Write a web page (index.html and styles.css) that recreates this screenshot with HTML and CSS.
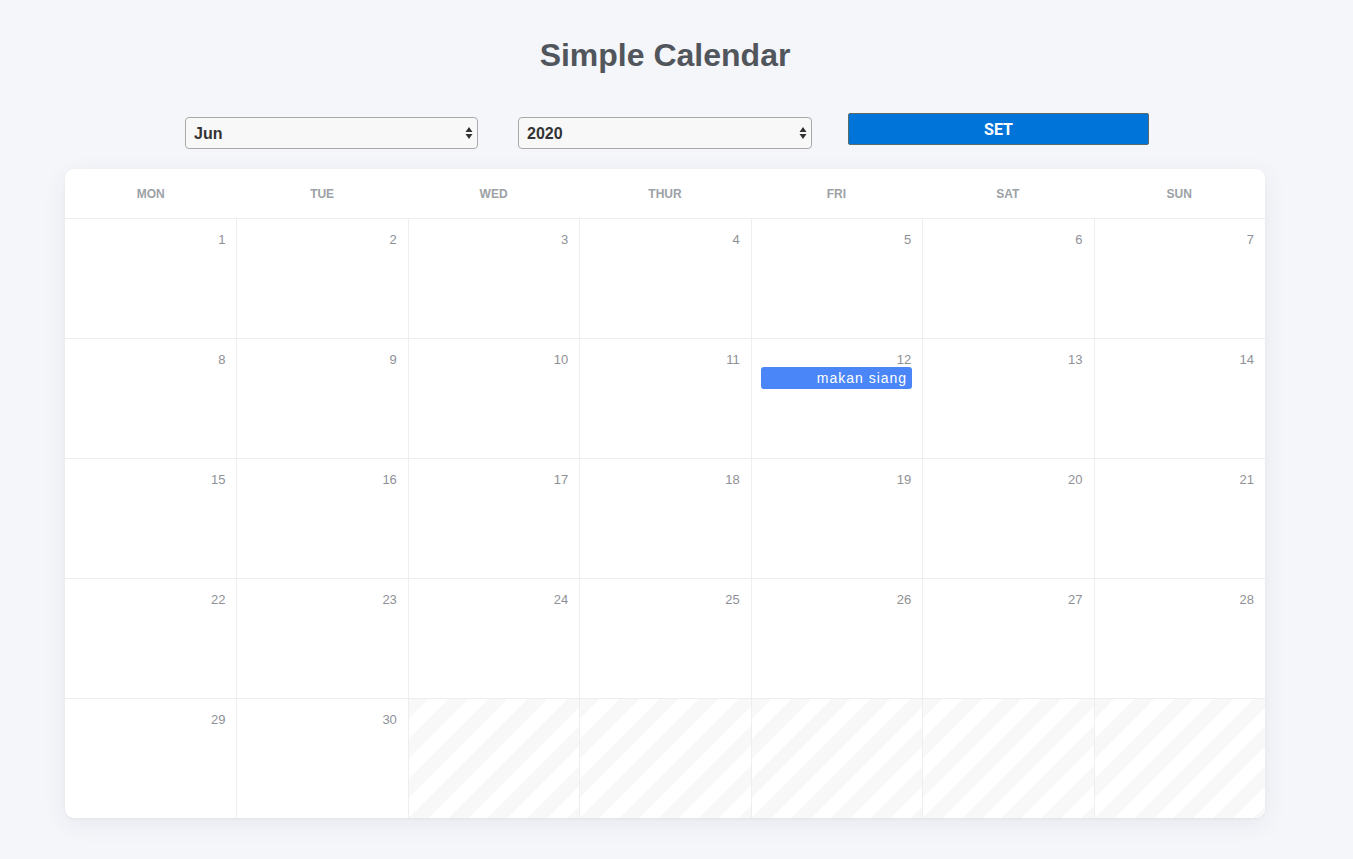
FILE: index.html
```html
<!DOCTYPE html>
<html lang="en">
<head>
<meta charset="utf-8">
<title>Simple Calendar</title>
<link rel="stylesheet" href="styles.css">
</head>
<body>
<div class="app">
  <h1 class="title">Simple Calendar</h1>
  <div class="controls">
    <div class="select-wrap month">
      <select class="select"><option>Jun</option></select>
      <svg class="arrows" width="8" height="14" viewBox="0 0 8 14"><path d="M4 1 L7.5 6 L0.5 6 Z M4 13 L7.5 8 L0.5 8 Z" fill="#333"/></svg>
    </div>
    <div class="select-wrap year">
      <select class="select"><option>2020</option></select>
      <svg class="arrows" width="8" height="14" viewBox="0 0 8 14"><path d="M4 1 L7.5 6 L0.5 6 Z M4 13 L7.5 8 L0.5 8 Z" fill="#333"/></svg>
    </div>
    <button class="set-btn">SET</button>
  </div>
  <div class="calendar">
    <div class="head">MON</div>
    <div class="head">TUE</div>
    <div class="head">WED</div>
    <div class="head">THUR</div>
    <div class="head">FRI</div>
    <div class="head">SAT</div>
    <div class="head">SUN</div>

    <div class="day first"><span class="num">1</span></div>
    <div class="day"><span class="num">2</span></div>
    <div class="day"><span class="num">3</span></div>
    <div class="day"><span class="num">4</span></div>
    <div class="day"><span class="num">5</span></div>
    <div class="day"><span class="num">6</span></div>
    <div class="day"><span class="num">7</span></div>

    <div class="day first"><span class="num">8</span></div>
    <div class="day"><span class="num">9</span></div>
    <div class="day"><span class="num">10</span></div>
    <div class="day"><span class="num">11</span></div>
    <div class="day"><span class="num">12</span><div class="event">makan siang</div></div>
    <div class="day"><span class="num">13</span></div>
    <div class="day"><span class="num">14</span></div>

    <div class="day first"><span class="num">15</span></div>
    <div class="day"><span class="num">16</span></div>
    <div class="day"><span class="num">17</span></div>
    <div class="day"><span class="num">18</span></div>
    <div class="day"><span class="num">19</span></div>
    <div class="day"><span class="num">20</span></div>
    <div class="day"><span class="num">21</span></div>

    <div class="day first"><span class="num">22</span></div>
    <div class="day"><span class="num">23</span></div>
    <div class="day"><span class="num">24</span></div>
    <div class="day"><span class="num">25</span></div>
    <div class="day"><span class="num">26</span></div>
    <div class="day"><span class="num">27</span></div>
    <div class="day"><span class="num">28</span></div>

    <div class="day first"><span class="num">29</span></div>
    <div class="day"><span class="num">30</span></div>
    <div class="day empty"></div>
    <div class="day empty"></div>
    <div class="day empty"></div>
    <div class="day empty"></div>
    <div class="day empty"></div>
  </div>
</div>
</body>
</html>
```

FILE: styles.css
```css
* { box-sizing: border-box; }

html, body {
  margin: 0;
  padding: 0;
  background: #f5f6fa;
  font-family: "Liberation Sans", Arial, sans-serif;
}

.app {
  width: 1330px;
  padding-top: 37px;
  padding-bottom: 40px;
}

.title {
  margin: 0;
  text-align: center;
  font-size: 32px;
  line-height: 37px;
  font-weight: bold;
  color: #51555c;
}

.controls {
  width: 964px;
  margin: 39px 0 0 185px;
  display: flex;
  align-items: flex-start;
}

.select-wrap {
  position: relative;
  margin-top: 4px;
  height: 32px;
}

.select-wrap.month { width: 293px; margin-right: 40px; }
.select-wrap.year { width: 294px; margin-right: 36px; }

.select {
  -webkit-appearance: none;
  appearance: none;
  width: 100%;
  height: 32px;
  margin: 0;
  padding: 0 0 0 8px;
  background: #f8f8f8;
  border: 1px solid #a9a9a9;
  border-radius: 4px;
  font-family: "Liberation Sans", Arial, sans-serif;
  font-size: 16px;
  font-weight: bold;
  color: #333;
}

.arrows {
  position: absolute;
  right: 5px;
  top: 9px;
}

.set-btn {
  width: 301px;
  height: 32px;
  margin: 0;
  padding: 0;
  background: #0074d9;
  border: 1px solid #5d6b68;
  border-radius: 2px;
  color: #fff;
  font-family: Roboto, "Liberation Sans", sans-serif;
  font-size: 16px;
  font-weight: bold;
}

.calendar {
  width: 1200px;
  margin: 20px auto 0;
  background: #fff;
  border-radius: 9px;
  box-shadow: 0 6px 24px rgba(40, 50, 90, 0.07), 0 1px 3px rgba(0, 0, 0, 0.04);
  display: grid;
  grid-template-columns: repeat(7, 1fr);
  grid-template-rows: 49px repeat(5, 120px);
  overflow: hidden;
}

.head {
  display: flex;
  align-items: center;
  justify-content: center;
  font-size: 12px;
  font-weight: bold;
  color: #9ca1a6;
  padding-top: 1px;
}

.day {
  border-top: 1px solid #eeeeee;
  border-left: 1px solid #eeeeee;
  padding: 13px 10px 0 9px;
  display: flex;
  flex-direction: column;
  align-items: stretch;
}

.day.first { border-left: none; }

.num {
  display: block;
  text-align: right;
  font-size: 13px;
  line-height: 15px;
  color: #8e9196;
  padding-right: 1px;
}

.event {
  height: 22px;
  line-height: 22px;
  background: #4a86f8;
  border-radius: 3px;
  color: #fff;
  font-size: 14px;
  letter-spacing: 1px;
  text-align: right;
  padding-right: 5px;
}

.day.empty {
  background: repeating-linear-gradient(135deg, #f8f8f8 0 14px, #ffffff 14px 28px);
}
```
